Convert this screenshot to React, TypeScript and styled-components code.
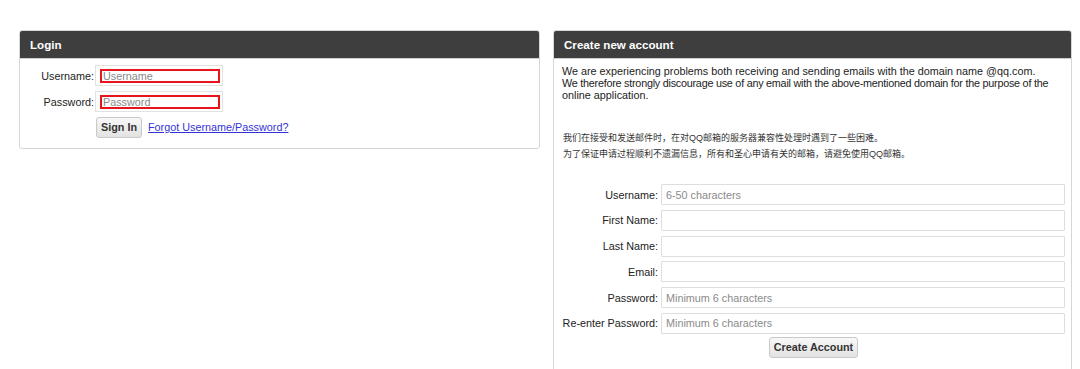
import styled, { createGlobalStyle } from 'styled-components'

const GlobalStyle = createGlobalStyle`
  body {
    margin: 0;
    background: #fff;
    font-family: "Liberation Sans", Arial, "Noto Sans CJK SC", sans-serif;
    font-size: 10.8px;
    color: #222;
  }
`

const signupFields = [
  { label: 'Username:', placeholder: '6-50 characters' },
  { label: 'First Name:', placeholder: '' },
  { label: 'Last Name:', placeholder: '' },
  { label: 'Email:', placeholder: '' },
  { label: 'Password:', placeholder: 'Minimum 6 characters' },
  { label: 'Re-enter Password:', placeholder: 'Minimum 6 characters' },
]

const noticeLines = [
  { text: 'We are experiencing problems both receiving and sending emails with the domain name @qq.com.', tracking: 0 },
  { text: 'We therefore strongly discourage use of any email with the above-mentioned domain for the purpose of the', tracking: -0.24 },
  { text: 'online application.', tracking: 0 },
]

export default function App() {
  return (
    <>
      <GlobalStyle />
      <Page>
        <Panel $width={521}>
          <PanelHeader>Login</PanelHeader>
          <LoginBody>
            <LoginGrid>
              <Label>Username:</Label>
              <FieldFrame>
                <LoginInput placeholder="Username" />
              </FieldFrame>
              <Label>Password:</Label>
              <FieldFrame>
                <LoginInput type="password" placeholder="Password" />
              </FieldFrame>
              <span />
              <ActionRow>
                <Button>Sign In</Button>
                <ForgotLink href="#">Forgot Username/Password?</ForgotLink>
              </ActionRow>
            </LoginGrid>
          </LoginBody>
        </Panel>

        <Panel $width={519}>
          <PanelHeader>Create new account</PanelHeader>
          <SignupBody>
            <Notice>
              {noticeLines.map(l => (
                <NoticeLine key={l.text} $tracking={l.tracking}>{l.text}</NoticeLine>
              ))}
            </Notice>
            <ChineseNotice>
              我们在接受和发送邮件时，在对QQ邮箱的服务器兼容性处理时遇到了一些困难。
              <br />
              为了保证申请过程顺利不遗漏信息，所有和圣心申请有关的邮箱，请避免使用QQ邮箱。
            </ChineseNotice>
            <SignupGrid>
              {signupFields.map(f => (
                <Row key={f.label}>
                  <Label>{f.label}</Label>
                  <TextInput placeholder={f.placeholder} />
                </Row>
              ))}
            </SignupGrid>
            <Centered>
              <Button>Create Account</Button>
            </Centered>
          </SignupBody>
        </Panel>
      </Page>
    </>
  )
}

const Page = styled.div`
  display: flex;
  align-items: flex-start;
  gap: 13px;
  padding: 30px 8px 0 19px;
`

const Panel = styled.div<{ $width: number }>`
  width: ${({ $width }) => $width}px;
  box-sizing: border-box;
  border: 1px solid #d6d6d6;
  border-radius: 3px;
  overflow: hidden;
  background: #fff;
`

const PanelHeader = styled.div`
  height: 27px;
  line-height: 27px;
  background: #3e3e3e;
  color: #fff;
  font-weight: 700;
  font-size: 11.6px;
  padding-left: 10px;
  border-bottom: 1px solid #cfcfcf;
`

const LoginBody = styled.div`
  padding: 6px 0 10px 0;
`

const LoginGrid = styled.div`
  display: grid;
  grid-template-columns: 74px auto;
  column-gap: 1px;
  grid-template-rows: 21px 21px 21px;
  row-gap: 5px;
  align-items: center;
  justify-content: start;
  & > :nth-child(5),
  & > :nth-child(6) {
    margin-top: -1px;
  }
`

const Label = styled.span`
  text-align: right;
  white-space: nowrap;
  color: #222;
`

const FieldFrame = styled.span`
  display: block;
  width: 128px;
  height: 21px;
  box-sizing: border-box;
  border: 1px solid #e2e2e2;
  padding: 3px 3px 2px 4px;
`

const LoginInput = styled.input`
  display: block;
  width: 120px;
  height: 14px;
  box-sizing: border-box;
  border: 2px solid #e8141c;
  outline: none;
  padding: 0 1px;
  font-family: inherit;
  font-size: 10.8px;
  color: #222;
  &::placeholder {
    color: #8a8a8a;
  }
`

const ActionRow = styled.div`
  display: flex;
  align-items: center;
  gap: 6px;
  margin-left: 1px;
`

const Button = styled.button`
  height: 21px;
  padding: 0 4px;
  border: 1px solid #c9c9c9;
  border-radius: 3px;
  background: linear-gradient(#f8f8f8, #e2e2e2);
  font-family: inherit;
  font-size: 10.8px;
  font-weight: 700;
  color: #333;
`

const ForgotLink = styled.a`
  color: #3434d6;
  text-decoration: underline;
  font-size: 10.8px;
`

const SignupBody = styled.div`
  padding: 6px 6px 16px 8px;
`

const Notice = styled.div`
  font-size: 10.8px;
  line-height: 12px;
  color: #222;
`

const NoticeLine = styled.div<{ $tracking: number }>`
  white-space: nowrap;
  letter-spacing: ${({ $tracking }) => $tracking}px;
`

const ChineseNotice = styled.p`
  margin: 29px 0 0 1px;
  font-family: "Liberation Sans", "Noto Sans CJK SC", sans-serif;
  font-size: 9px;
  line-height: 16px;
  color: #333;
`

const SignupGrid = styled.div`
  display: flex;
  flex-direction: column;
  gap: 4.8px;
  margin-top: 22px;
`

const Row = styled.div`
  display: grid;
  grid-template-columns: 96px 1fr;
  column-gap: 3px;
  align-items: center;
`

const TextInput = styled.input`
  height: 21px;
  box-sizing: border-box;
  border: 1px solid #dedede;
  border-radius: 1px;
  padding: 0 4px;
  outline: none;
  font-family: inherit;
  font-size: 10.8px;
  color: #222;
  &::placeholder {
    color: #8a8a8a;
  }
`

const Centered = styled.div`
  display: flex;
  justify-content: center;
  margin-top: 3px;
`
